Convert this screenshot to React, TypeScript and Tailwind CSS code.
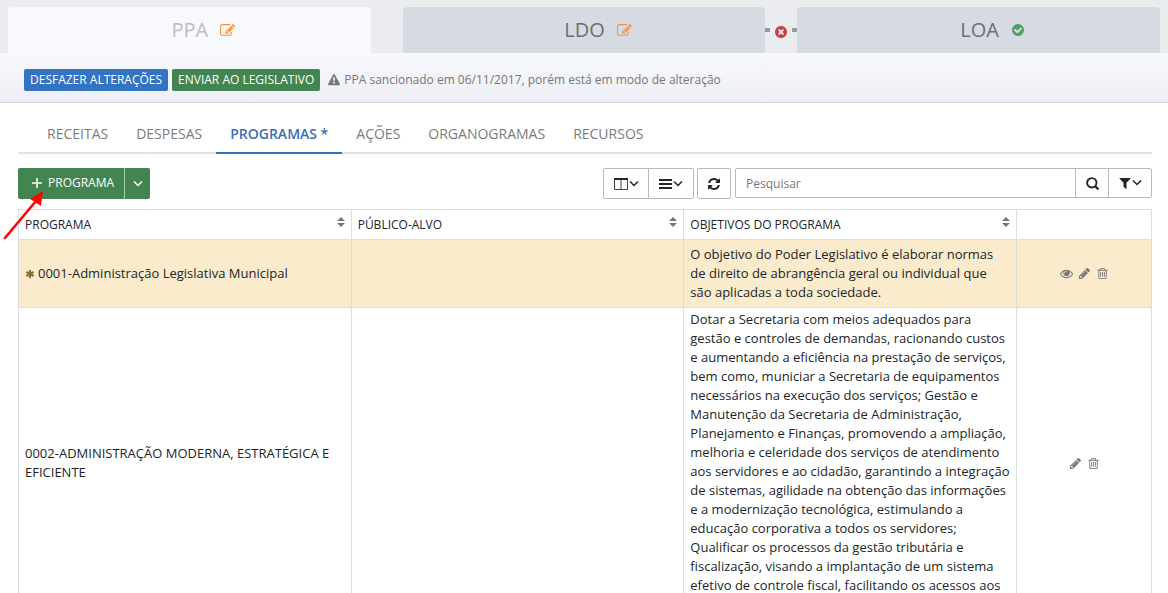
import type { ReactNode } from "react";

// Font Awesome 4 glyphs, 1792 units square
const icons = {
  edit: "M888 1184l116-116-152-152-116 116v56h96v96h56zm440-720q-16-16-33 1l-350 350q-17 17-1 33t33-1l350-350q17-17 1-33zm80 594v190q0 119-84.5 203.5t-203.5 84.5h-832q-119 0-203.5-84.5t-84.5-203.5v-832q0-119 84.5-203.5t203.5-84.5h832q63 0 117 25 15 7 18 23 3 17-9 29l-49 49q-14 14-32 8-23-6-45-6h-832q-66 0-113 47t-47 113v832q0 66 47 113t113 47h832q66 0 113-47t47-113v-126q0-13 9-22l64-64q15-15 35-7t20 29zm-96-738l288 288-672 672h-288v-288zm444 132l-92 92-288-288 92-92q28-28 68-28t68 28l152 152q28 28 28 68t-28 68z",
  eye: "M1664 960q-152-236-381-353 61 104 61 225 0 185-131.5 316.5t-316.5 131.5-316.5-131.5-131.5-316.5q0-121 61-225-229 117-381 353 133 205 333.5 326.5t434.5 121.5 434.5-121.5 333.5-326.5zm-720-384q0-20-14-34t-34-14q-125 0-214.5 89.5t-89.5 214.5q0 20 14 34t34 14 34-14 14-34q0-86 61-147t147-61q20 0 34-14t14-34zm848 384q0 34-20 69-140 230-376.5 368.5t-499.5 138.5-499.5-139-376.5-368q-20-35-20-69t20-69q140-229 376.5-368t499.5-139 499.5 139 376.5 368q20 35 20 69z",
  pencil:
    "M491 1536l91-91-235-235-91 91v107h128v128h107zm523-928q0-22-22-22-10 0-17 7l-542 542q-7 7-7 17 0 22 22 22 10 0 17-7l542-542q7-7 7-17zm-54-192l416 416-832 832h-416v-416zm683 96q0 53-37 90l-166 166-416-416 166-165q36-38 90-38 53 0 91 38l235 234q37 39 37 91z",
  trash:
    "M704 736v576q0 14-9 23t-23 9h-64q-14 0-23-9t-9-23v-576q0-14 9-23t23-9h64q14 0 23 9t9 23zm256 0v576q0 14-9 23t-23 9h-64q-14 0-23-9t-9-23v-576q0-14 9-23t23-9h64q14 0 23 9t9 23zm256 0v576q0 14-9 23t-23 9h-64q-14 0-23-9t-9-23v-576q0-14 9-23t23-9h64q14 0 23 9t9 23zm128 724v-948h-896v948q0 22 7 40.5t14.5 27 10.5 8.5h832q3 0 10.5-8.5t14.5-27 7-40.5zm-672-1076h448l-48-117q-7-9-17-11h-317q-10 2-17 11zm928 32v64q0 14-9 23t-23 9h-96v948q0 83-47 143.5t-113 60.5h-832q-66 0-113-58.5t-47-141.5v-952h-96q-14 0-23-9t-9-23v-64q0-14 9-23t23-9h309l70-167q15-37 54-63t79-26h320q40 0 79 26t54 63l70 167h309q14 0 23 9t9 23z",
  times:
    "M1277 1122q0-26-19-45l-181-181 181-181q19-19 19-45 0-27-19-46l-90-90q-19-19-46-19-26 0-45 19l-181 181-181-181q-19-19-45-19-27 0-46 19l-90 90q-19 19-19 46 0 26 19 45l181 181-181 181q-19 19-19 45 0 27 19 46l90 90q19 19 46 19 26 0 45-19l181-181 181 181q19 19 45 19 27 0 46-19l90-90q19-19 19-46zm387-226q0 209-103 385.5t-279.5 279.5-385.5 103-385.5-103-279.5-279.5-103-385.5 103-385.5 279.5-279.5 385.5-103 385.5 103 279.5 279.5 103 385.5z",
  check:
    "M1412 734q0-28-18-46l-91-90q-19-19-45-19t-45 19l-408 407-226-226q-19-19-45-19t-45 19l-91 90q-18 18-18 46 0 27 18 45l362 362q19 19 45 19 27 0 46-19l543-543q18-18 18-45zm252 162q0 209-103 385.5t-279.5 279.5-385.5 103-385.5-103-279.5-279.5-103-385.5 103-385.5 279.5-279.5 385.5-103 385.5 103 279.5 279.5 103 385.5z",
  warning:
    "M1024 1375v-190q0-14-9.5-23.5t-22.5-9.5h-192q-13 0-22.5 9.5t-9.5 23.5v190q0 14 9.5 23.5t22.5 9.5h192q13 0 22.5-9.5t9.5-23.5zm-2-374l18-459q0-12-10-19-13-11-24-11h-220q-11 0-24 11-10 7-10 21l17 457q0 10 10 16.5t24 6.5h185q14 0 23.5-6.5t10.5-16.5zm-14-934l768 1408q35 63-2 126-17 29-46.5 46t-63.5 17h-1536q-34 0-63.5-17t-46.5-46q-37-63-2-126l768-1408q17-31 47-49t65-18 65 18 47 49z",
  refresh:
    "M1639 1056q0 5-1 7-64 268-268 434.5t-478 166.5q-146 0-282.5-55t-243.5-157l-129 129q-19 19-45 19t-45-19-19-45v-448q0-26 19-45t45-19h448q26 0 45 19t19 45-19 45l-137 137q71 66 161 102t187 36q134 0 250-65t186-179q11-17 53-117 8-23 30-23h192q13 0 22.5 9.5t9.5 22.5zm25-800v448q0 26-19 45t-45 19h-448q-26 0-45-19t-19-45 19-45l138-138q-148-137-349-137-134 0-250 65t-186 179q-11 17-53 117-8 23-30 23h-199q-13 0-22.5-9.5t-9.5-22.5v-7q65-268 270-434.5t480-166.5q146 0 284 55.5t245 156.5l130-129q19-19 45-19t45 19 19 45z",
  filter:
    "M1595 295q17 41-14 70l-493 493v742q0 42-39 59-13 5-25 5-27 0-45-19l-256-256q-19-19-19-45v-486l-493-493q-31-29-14-70 17-39 59-39h1280q42 0 59 39z",
  asterisk:
    "M1546 1050q46 26 59.5 77.5t-12.5 97.5l-64 110q-26 46-77.5 59.5t-97.5-12.5l-266-153v307q0 52-38 90t-90 38h-128q-52 0-90-38t-38-90v-307l-266 153q-46 26-97.5 12.5t-77.5-59.5l-64-110q-26-46-12.5-97.5t59.5-77.5l266-154-266-154q-46-26-59.5-77.5t12.5-97.5l64-110q26-46 77.5-59.5t97.5 12.5l266 153v-307q0-52 38-90t90-38h128q52 0 90 38t38 90v307l266-153q46-26 97.5-12.5t77.5 59.5l64 110q26 46 12.5 97.5t-59.5 77.5l-266 154z",
};

type IconProps = {
  name: keyof typeof icons;
  className?: string;
};

function Icon({ name, className = "size-3" }: IconProps) {
  return (
    <svg
      viewBox="0 0 1792 1792"
      fill="currentColor"
      className={`shrink-0 ${className}`}
      aria-hidden="true"
    >
      <path d={icons[name]} />
    </svg>
  );
}

function Chevron() {
  return (
    <svg viewBox="0 0 10 10" className="size-2.5 shrink-0" aria-hidden="true">
      <path
        d="M1 2.500l4 4 4-4"
        fill="none"
        stroke="currentColor"
        strokeWidth="1.5"
      />
    </svg>
  );
}

function StageTab({
  label,
  active,
  children,
}: {
  label: string;
  active?: boolean;
  children: ReactNode;
}) {
  return (
    <button
      type="button"
      className={`flex flex-1 items-center justify-center gap-3 rounded-t pl-7 text-xl ${
        active ? "bg-[#f8f9fd] text-[#bdbdbd]" : "bg-[#d6dbe3] text-[#6b6e73]"
      }`}
    >
      {label}
      {children}
    </button>
  );
}

const tabs = [
  "RECEITAS",
  "DESPESAS",
  "PROGRAMAS *",
  "AÇÕES",
  "ORGANOGRAMAS",
  "RECURSOS",
];

const columns = ["PROGRAMA", "PÚBLICO-ALVO", "OBJETIVOS DO PROGRAMA"];

const toolButton =
  "flex h-full items-center justify-center border border-[#b9b9b9] bg-white";
const cell = "border border-[#dcdee2] px-1.5 py-0.5";

function SortIcon() {
  return (
    <svg viewBox="0 0 8 10" className="mt-[5px] h-2.5 w-2" aria-hidden="true">
      <path d="M0 4l4-4 4 4zM0 6h8l-4 4z" fill="#777" />
    </svg>
  );
}

function ActionButton({ name, label }: { name: IconProps["name"]; label: string }) {
  return (
    <button type="button" aria-label={label} title={label}>
      <Icon name={name} className="size-[13px]" />
    </button>
  );
}

export default function App() {
  return (
    <main className="relative h-screen overflow-hidden bg-white font-['Open_Sans',sans-serif] text-[13px] leading-[19px] text-[#212529]">
      <header className="flex h-[53px] bg-[#ebecef] px-2 pt-[7px]">
        <StageTab label="PPA" active>
          <Icon name="edit" className="size-[15px] text-[#f6943a]" />
        </StageTab>
        <div className="w-8" />
        <StageTab label="LDO">
          <Icon name="edit" className="size-[15px] text-[#f6943a]" />
        </StageTab>
        <div className="flex w-8 items-center justify-between text-[#cb3d40]">
          <span className="h-1 w-[5px] bg-[#999]" />
          <Icon name="times" className="mt-1 size-3.5" />
          <span className="h-1 w-[5px] bg-[#999]" />
        </div>
        <StageTab label="LOA">
          <Icon name="check" className="size-3.5 text-[#4f9f68]" />
        </StageTab>
      </header>

      <section className="flex h-[50px] items-center gap-1 border-b border-[#d5d6dc] bg-linear-to-b from-[#f8f9fd] to-[#eeeff5] px-6 pt-1 text-xs">
        <button
          type="button"
          className="h-[22px] rounded-xs bg-[#3273c2] px-1.5 text-white"
        >
          DESFAZER ALTERAÇÕES
        </button>
        <button
          type="button"
          className="h-[22px] rounded-xs bg-[#438550] px-1.5 text-white"
        >
          ENVIAR AO LEGISLATIVO
        </button>
        <p className="ml-1 flex items-center gap-1 text-[#777]">
          <Icon name="warning" />
          PPA sancionado em 06/11/2017, porém está em modo de alteração
        </p>
      </section>

      <div className="pt-3 pr-4 pl-[18px]">
        <nav className="flex border-b-2 border-[#e2e3e5] px-[15px] text-sm text-[#7b7b7b]">
          {tabs.map((tab) => (
            <a
              key={tab}
              href="#"
              className={`-mb-0.5 border-b-2 px-3.5 pt-[9px] pb-2 ${
                tab === "PROGRAMAS *"
                  ? "border-[#3470b5] font-semibold text-[#3b6fb6]"
                  : "border-transparent"
              }`}
            >
              {tab}
            </a>
          ))}
        </nav>

        <div className="mt-3.5 flex items-start">
          <div className="flex h-[31px] text-xs text-white">
            <button
              type="button"
              className="flex items-center gap-1.5 rounded-l-xs bg-[#438550] pr-2.5 pb-0.5 pl-3.5"
            >
              <svg viewBox="0 0 10 10" className="size-2.5" aria-hidden="true">
                <path d="M5 0v10M0 5h10" stroke="currentColor" strokeWidth="1.6" />
              </svg>
              PROGRAMA
            </button>
            <button
              type="button"
              aria-label="Mais opções"
              className="flex w-[26px] items-center justify-center rounded-r-xs border-l border-[#a9cbb0] bg-[#438550]"
            >
              <Chevron />
            </button>
          </div>

          <div className="ml-auto flex h-[31px]">
            <button
              type="button"
              aria-label="Colunas"
              className={`${toolButton} w-[46px] gap-px rounded-l-xs`}
            >
              <svg viewBox="0 0 14 12" className="h-3 w-3.5" aria-hidden="true">
                <path d="M.5 1v10.500h13V1M7 1v10.500" fill="none" stroke="#44443a" />
                <path d="M0 1h14" stroke="#212529" strokeWidth="2" />
              </svg>
              <Chevron />
            </button>
            <button
              type="button"
              aria-label="Linhas"
              className={`${toolButton} -ml-px w-[46px] gap-px rounded-r-xs`}
            >
              <svg viewBox="0 0 13 12" className="h-3 w-[13px]" aria-hidden="true">
                <path d="M0 2h13M0 6h13M0 10h13" stroke="currentColor" strokeWidth="2" />
              </svg>
              <Chevron />
            </button>
            <button
              type="button"
              aria-label="Atualizar"
              className={`${toolButton} ml-[3px] w-[34px] rounded-xs`}
            >
              <Icon name="refresh" className="size-3.5" />
            </button>
          </div>

          <div className="ml-1 flex h-[30px] w-[417px]">
            <input
              type="text"
              aria-label="Pesquisar"
              placeholder="Pesquisar"
              className="h-full min-w-0 flex-1 rounded-l-xs border border-[#b9b9b9] px-2.5 text-xs placeholder:text-[#777]"
            />
            <button
              type="button"
              aria-label="Buscar"
              className={`${toolButton} -ml-px w-[34px]`}
            >
              <svg viewBox="0 0 13 13" className="size-[13px]" aria-hidden="true">
                <g fill="none" stroke="currentColor" strokeWidth="1.9">
                  <circle cx="5.8" cy="5.8" r="4.700" />
                  <path d="M9 9l3.500 3.500" strokeWidth="2.200" />
                </g>
              </svg>
            </button>
            <button
              type="button"
              aria-label="Filtrar"
              className={`${toolButton} -ml-px w-11 rounded-r-xs`}
            >
              <Icon name="filter" className="size-3.5" />
              <Chevron />
            </button>
          </div>
        </div>

        <table className="mt-2.5 w-full table-fixed border-collapse">
          <thead>
            <tr className="h-[30px]">
              {columns.map((column) => (
                <th
                  key={column}
                  scope="col"
                  className={`${cell} text-left align-top text-xs font-normal`}
                >
                  <div className="flex justify-between">
                    <span className="pt-[5px]">{column}</span>
                    <SortIcon />
                  </div>
                </th>
              ))}
              <td className={`${cell} w-[135px]`} />
            </tr>
          </thead>
          <tbody>
            <tr className="h-[68px] bg-[#faebcc]">
              <td className={cell}>
                <div className="flex items-center gap-[3px]">
                  <Icon name="asterisk" className="size-2.5 text-[#8a6d3b]" />
                  0001-Administração Legislativa Municipal
                </div>
              </td>
              <td className={cell} />
              <td className={cell}>
                O objetivo do Poder Legislativo é elaborar normas de direito de
                abrangência geral ou individual que são aplicadas a toda
                sociedade.
              </td>
              <td className={cell}>
                <div className="flex items-center justify-center gap-[5px] text-[#777]">
                  <ActionButton name="eye" label="Visualizar" />
                  <ActionButton name="pencil" label="Editar" />
                  <ActionButton name="trash" label="Excluir" />
                </div>
              </td>
            </tr>
            <tr className="h-[311px]">
              <td className={cell}>
                0002-ADMINISTRAÇÃO MODERNA, ESTRATÉGICA E EFICIENTE
              </td>
              <td className={cell} />
              <td className={`${cell} align-top`}>
                Dotar a Secretaria com meios adequados para gestão e controles
                de demandas, racionando custos e aumentando a eficiência na
                prestação de serviços, bem como, municiar a Secretaria de
                equipamentos necessários na execução dos serviços; Gestão e
                Manutenção da Secretaria de Administração, Planejamento e
                Finanças, promovendo a ampliação, melhoria e celeridade dos
                serviços de atendimento aos servidores e ao cidadão, garantindo
                a integração de sistemas, agilidade na obtenção das informações
                e a modernização tecnológica, estimulando a educação
                corporativa a todos os servidores; Qualificar os processos da
                gestão tributária e fiscalização, visando a implantação de um
                sistema efetivo de controle fiscal, facilitando os acessos aos
              </td>
              <td className={cell}>
                <div className="flex items-center justify-center gap-[5px] text-[#777]">
                  <ActionButton name="pencil" label="Editar" />
                  <ActionButton name="trash" label="Excluir" />
                </div>
              </td>
            </tr>
          </tbody>
        </table>
      </div>

      {/* Pointer to the "new program" button */}
      <svg
        viewBox="0 0 44 52"
        className="pointer-events-none absolute top-[190px] left-0 h-[52px] w-11"
        aria-hidden="true"
      >
        <path d="M5 48L36 11" stroke="#f40b0b" strokeWidth="2.700" strokeLinecap="round" />
        <path d="M43 1L30 9l5 3 6 4z" fill="#fb0505" />
      </svg>
    </main>
  );
}
